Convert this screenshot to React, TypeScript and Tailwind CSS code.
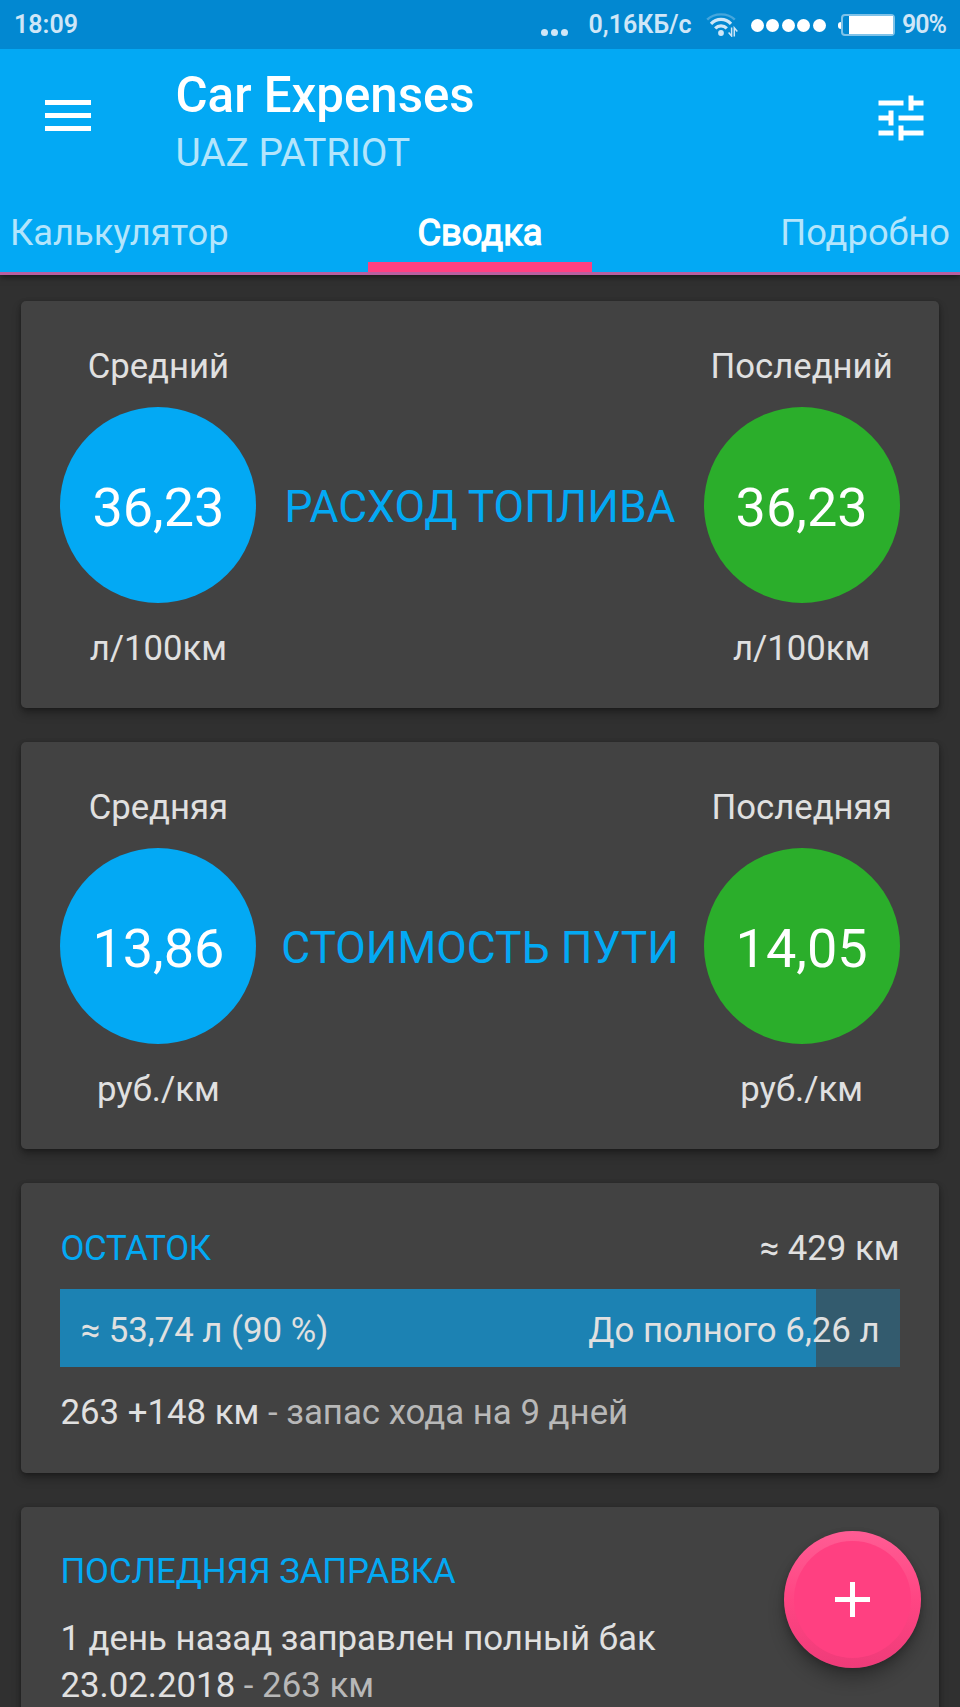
import type { ReactNode } from "react";

interface Reading {
  label: string;
  value: string;
  unit: string;
}

interface MetricCardProps {
  title: string;
  average: Reading;
  last: Reading;
}

const tabs = ["Калькулятор", "Сводка", "Подробно"];
const activeTab = "Сводка";

const tank = {
  distance: "≈ 429 км",
  volume: "≈ 53,74 л (90 %)",
  toFull: "До полного 6,26 л",
  percent: 90,
};

const metrics: MetricCardProps[] = [
  {
    title: "РАСХОД ТОПЛИВА",
    average: { label: "Средний", value: "36,23", unit: "л/100км" },
    last: { label: "Последний", value: "36,23", unit: "л/100км" },
  },
  {
    title: "СТОИМОСТЬ ПУТИ",
    average: { label: "Средняя", value: "13,86", unit: "руб./км" },
    last: { label: "Последняя", value: "14,05", unit: "руб./км" },
  },
];

function WifiIcon() {
  return (
    <svg className="ml-[14px] h-[24px] w-[32px]" viewBox="0 0 32 24" fill="none" aria-hidden="true">
      <path d="M1.2 6.6C8 -.4 22 -.4 28.8 6.6" stroke="#46a6dc" strokeWidth="2.4" />
      <path d="M5 10.8C10.5 5 19.5 5 25 10.8" stroke="#cfe6f7" strokeWidth="3.2" />
      <path d="M9.2 15.4C12.4 12 17.6 12 20.8 15.4" stroke="#cfe6f7" strokeWidth="3.2" />
      <circle cx="15" cy="20" r="2.9" fill="#cfe6f7" />
      <path d="M25.6 14.5V23L22.6 19.5M28.3 23.5V14.8L31.3 18.5" stroke="#cfe6f7" strokeWidth="1.5" />
    </svg>
  );
}

function StatusBar() {
  return (
    <div className="flex h-[49px] items-center bg-[#0288d1] pt-px pr-[14px] pl-[14px] text-[25px] leading-[48px] font-semibold text-[#cfe6f7]">
      <span>18:09</span>
      <div className="mt-[14px] ml-auto flex gap-[3px]">
        {[0, 1, 2].map((dot) => (
          <span key={dot} className="size-[7px] rounded-full bg-[#cfe6f7]" />
        ))}
      </div>
      <span className="ml-[21px]">0,16КБ/с</span>
      <WifiIcon />
      <div className="ml-[13px] flex gap-[2.6px]">
        {[0, 1, 2, 3, 4].map((dot) => (
          <span key={dot} className="size-[13px] rounded-full bg-white" />
        ))}
      </div>
      <div className="ml-[12px] flex items-center">
        <span className="h-[7px] w-[3px] rounded-l-sm bg-white" />
        <span className="flex h-[22px] w-[54px] justify-end rounded-[4px] border-2 border-[#7fc2e8]">
          <span className="h-full w-[44px] bg-white" />
        </span>
      </div>
      <span className="ml-[7px] tracking-[-1px]">90%</span>
    </div>
  );
}

function Toolbar() {
  return (
    <div className="flex h-[144px] items-start pt-[21px] pr-[29px] pl-[45px]">
      <button className="mt-[30px] flex w-[46px] flex-col gap-[8px]" aria-label="Меню">
        <span className="h-[5px] w-full bg-white" />
        <span className="h-[5px] w-full bg-white" />
        <span className="h-[5px] w-full bg-white" />
      </button>
      <div className="ml-[84.5px]">
        <h1 className="text-[49.2px] leading-[50px] font-medium text-white">Car Expenses</h1>
        <p className="mt-[10px] text-[38.8px] leading-[46px] text-[#b3e5fc]">UAZ PATRIOT</p>
      </div>
      <button className="mt-[17.5px] ml-auto" aria-label="Настройки">
        <svg className="size-[60px] fill-white" viewBox="0 0 24 24">
          <path d="M3 17v2h6v-2H3zM3 5v2h10V5H3zm10 16v-2h8v-2h-8v-2h-2v6h2zM7 9v2H3v2h4v2h2V9H7zm14 4v-2H11v2h10zm-6-4h2V7h4V5h-4V3h-2v6z" />
        </svg>
      </button>
    </div>
  );
}

function Tabs() {
  return (
    <nav className="grid h-[82px] grid-cols-[368px_224px_368px] border-b-3 border-[#b85f9f] text-[36.3px] leading-[79px]">
      {tabs.map((tab) => (
        <a
          key={tab}
          className={
            tab === activeTab
              ? "h-[79px] border-b-10 border-[#ff4081] text-center text-white [-webkit-text-stroke:1.3px_white]"
              : "h-[79px] px-[10px] text-[#b3e5fc] last:text-right"
          }
        >
          {tab}
        </a>
      ))}
    </nav>
  );
}

function Card({ children, className = "" }: { children: ReactNode; className?: string }) {
  return (
    <section
      className={`rounded-[5px] bg-[#424242] px-[39px] shadow-[0_6px_10px_rgba(0,0,0,0.28),0_1px_4px_rgba(0,0,0,0.3)] ${className}`}
    >
      {children}
    </section>
  );
}

function Gauge({ reading, color }: { reading: Reading; color: string }) {
  return (
    <div className="flex w-[196px] flex-col items-center text-[34.7px] leading-[42px] whitespace-nowrap">
      <span>{reading.label}</span>
      <div
        className={`mt-[20px] flex size-[196px] items-center justify-center rounded-full pt-[5px] text-[54px] text-white ${color}`}
      >
        {reading.value}
      </div>
      <span className="mt-[24px]">{reading.unit}</span>
    </div>
  );
}

function MetricCard({ title, average, last }: MetricCardProps) {
  return (
    <Card className="flex h-[407px] items-start justify-between pt-[44px]">
      <Gauge reading={average} color="bg-[#03a9f4]" />
      <h2 className="mt-[136px] text-[44.4px] leading-[52px] whitespace-nowrap text-[#03a9f4]">{title}</h2>
      <Gauge reading={last} color="bg-[#2bae2b]" />
    </Card>
  );
}

function TankCard() {
  return (
    <Card className="h-[290px] pt-[44px]">
      <div className="flex justify-between">
        <h2 className="tracking-[-0.3px] text-[#03a9f4]">ОСТАТОК</h2>
        <span>{tank.distance}</span>
      </div>
      <div className="relative mt-[20px] h-[78px] bg-[#335b6e]">
        <div className="h-full bg-[#1c82b3]" style={{ width: `${tank.percent}%` }} />
        <div className="absolute inset-0 flex justify-between px-[20px] pt-[2px] leading-[78px]">
          <span>{tank.volume}</span>
          <span>{tank.toFull}</span>
        </div>
      </div>
      <p className="mt-[24px]">
        263 +148 км <span className="text-[#b8b8b8]">- запас хода на 9 дней</span>
      </p>
    </Card>
  );
}

function LastRefuelCard() {
  return (
    <Card className="h-[300px] pt-[43px]">
      <h2 className="tracking-[-0.1px] text-[#03a9f4]">ПОСЛЕДНЯЯ ЗАПРАВКА</h2>
      <div className="mt-[23px] leading-[47px]">
        <p>1 день назад заправлен полный бак</p>
        <p>
          23.02.2018 <span className="text-[#b8b8b8]">- 263 км</span>
        </p>
      </div>
    </Card>
  );
}

function App() {
  return (
    <div className="relative h-[1707px] w-[960px] overflow-hidden bg-[#303030] font-[Roboto,sans-serif] text-[34.8px] leading-[42px] text-[#e0e0e0]">
      <header className="bg-[#03a9f4] shadow-[0_2px_6px_rgba(0,0,0,0.5)]">
        <StatusBar />
        <Toolbar />
        <Tabs />
      </header>
      <main className="flex flex-col gap-[34px] px-[21.4px] pt-[26.4px]">
        {metrics.map((metric) => (
          <MetricCard key={metric.title} {...metric} />
        ))}
        <TankCard />
        <LastRefuelCard />
      </main>
      <button
        className="absolute top-[1531px] left-[784px] flex size-[137px] items-center justify-center rounded-full bg-linear-to-b from-[#ff5c94] via-[#ff4583] to-[#ef3b79] shadow-[0_12px_16px_rgba(0,0,0,0.25),0_2px_6px_rgba(0,0,0,0.2)]"
        aria-label="Добавить"
      >
        <span className="flex size-[117px] items-center justify-center rounded-full bg-[#ff4081]">
          <svg className="size-[35px]" viewBox="0 0 35 35" stroke="white" strokeWidth="5">
            <path d="M17.5 0v35M0 17.5h35" />
          </svg>
        </span>
      </button>
    </div>
  );
}

export default App;
